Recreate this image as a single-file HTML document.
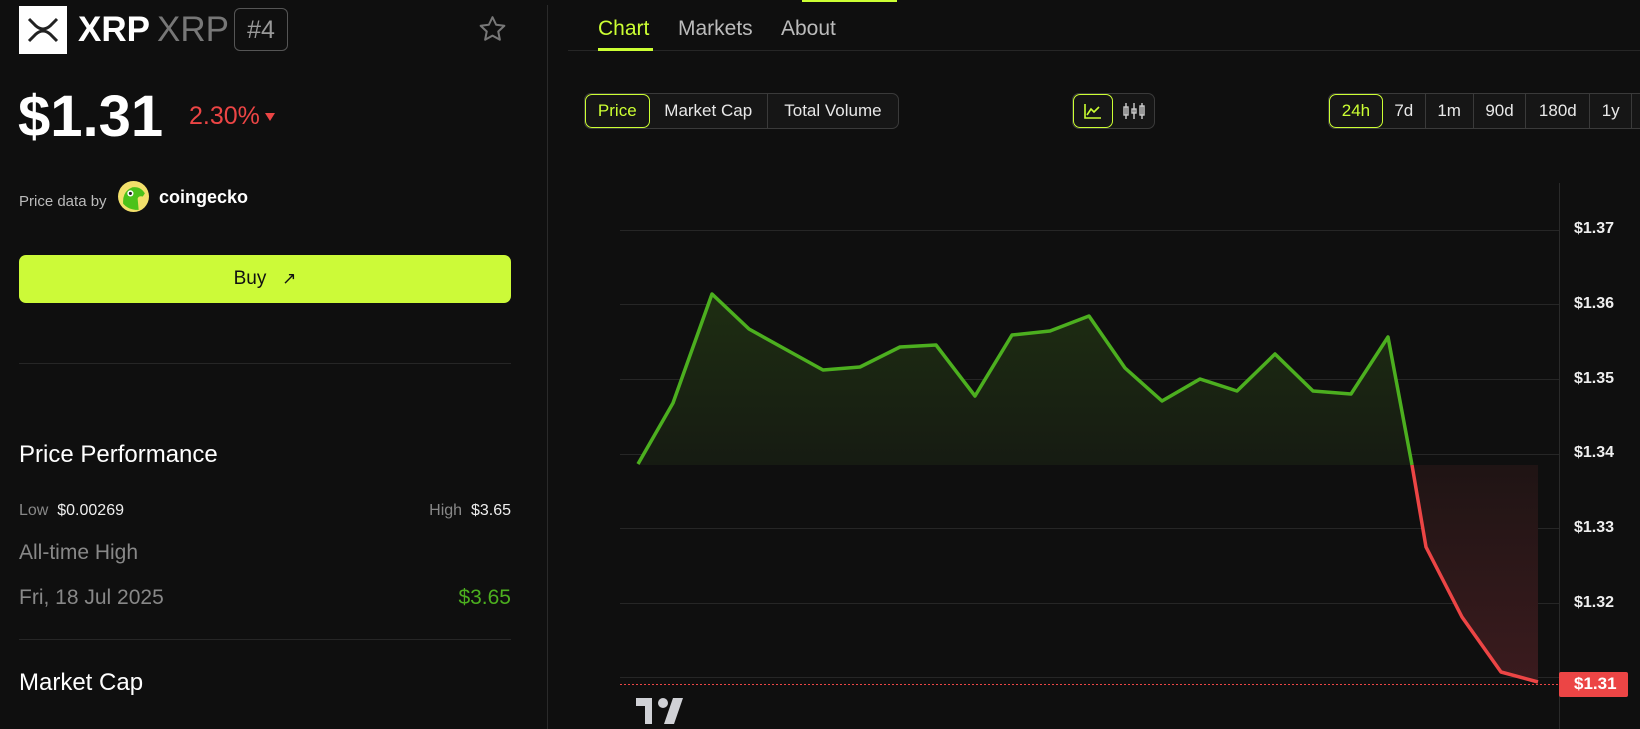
<!DOCTYPE html>
<html><head><meta charset="utf-8"><style>
*{margin:0;padding:0;box-sizing:border-box}
body{width:1640px;height:729px;background:#0f0f0f;overflow:hidden;position:relative;font-family:"Liberation Sans",sans-serif;color:#fff}
.a{position:absolute;white-space:nowrap}
.grp{position:absolute;display:flex;border:1px solid #3a3a3a;border-radius:7px;background:#161616;overflow:hidden;height:36px}
.grp div{display:flex;align-items:center;justify-content:center;border-right:1px solid #3a3a3a;font-size:17px;color:#e8e8e8;height:100%}
.grp div:last-child{border-right:none}
.grp .on{color:#ccff33;border:1px solid #ccff33;border-radius:7px}
.yl{position:absolute;left:1574px;font-size:16px;font-weight:bold;color:#eee}
</style></head><body>
<!-- chart -->
<svg class="a" style="left:0;top:0" width="1640" height="729">
<defs><linearGradient id="g" x1="0" y1="0" x2="0" y2="1"><stop offset="0" stop-color="#1e2e12"/><stop offset="1" stop-color="#161b12"/></linearGradient>
<linearGradient id="r" x1="0" y1="0" x2="0" y2="1"><stop offset="0" stop-color="#1f1414"/><stop offset="1" stop-color="#3b1b1e"/></linearGradient></defs>
<g stroke="#262626" stroke-width="1"><path d="M620 230.5H1559M620 304.5H1559M620 379.5H1559M620 454.5H1559M620 528.5H1559M620 603.5H1559M620 677.5H1559"/></g>
<path d="M1559.5 183V729" stroke="#2a2a2a"/>
<path d="M638 465 L638 464 673 403 712 294 749 329 785 349 823 370 860 367 900 347 936 345 975 396 1012 335 1050 331 1089 316 1125 368 1162 401 1200 379 1237 391 1275 354 1313 391 1351 394 1388 337 1412 465Z" fill="url(#g)"/>
<path d="M1412 465 L1426 547 1462 617 1501 672 1538 682 1538 465Z" fill="url(#r)"/>
<path d="M638 464 673 403 712 294 749 329 785 349 823 370 860 367 900 347 936 345 975 396 1012 335 1050 331 1089 316 1125 368 1162 401 1200 379 1237 391 1275 354 1313 391 1351 394 1388 337 1412 465" fill="none" stroke="#4caf1f" stroke-width="3.5" stroke-linejoin="round"/>
<path d="M1412 465 L1426 547 1462 617 1501 672 1538 682" fill="none" stroke="#ec4545" stroke-width="3.5" stroke-linejoin="round"/>
<path d="M620 684.5H1559" stroke="#ec4545" stroke-width="1" stroke-dasharray="2 2"/>
<rect x="1559" y="672" width="69" height="25" rx="2" fill="#ec4545"/>
<g fill="#d0d1d6"><path d="M636 698H652V724H645V706H636Z"/><circle cx="663" cy="703" r="5"/><path d="M673 698H683L674 724H664Z"/></g>
</svg>
<!-- left -->
<div class="a" style="left:19px;top:6px;width:48px;height:48px;background:#fff">
<svg width="48" height="48" viewBox="0 0 48 48"><path d="M10 13 L17 20 Q24 26 31 20 L38 13 M10 35 L17 28 Q24 22 31 28 L38 35" stroke="#222" stroke-width="3" fill="none"/></svg></div>
<div class="a" style="left:78px;top:8px;font-size:35px;font-weight:bold;line-height:44px">XRP</div>
<div class="a" style="left:157px;top:8px;font-size:35px;color:#777;line-height:44px">XRP</div>
<div class="a" style="left:234px;top:8px;width:54px;height:43px;border:1px solid #555;border-radius:6px;color:#999;font-size:25px;text-align:center;line-height:42px">#4</div>
<svg class="a" style="left:477px;top:14px" width="31" height="30" viewBox="0 0 24 24"><path d="M12 2.5l2.9 6.1 6.6.8-4.9 4.6 1.3 6.6L12 17.3 6.1 20.6l1.3-6.6-4.9-4.6 6.6-.8z" fill="none" stroke="#777" stroke-width="1.6" stroke-linejoin="round"/></svg>
<div class="a" style="left:18px;top:84px;font-size:58px;font-weight:bold;line-height:66px">$1.31</div>
<div class="a" style="left:189px;top:101px;font-size:25px;color:#ec4545;line-height:30px">2.30%</div>
<div class="a" style="left:265px;top:113px;width:0;height:0;border-left:5px solid transparent;border-right:5px solid transparent;border-top:8px solid #ec4545"></div>
<div class="a" style="left:19px;top:193px;font-size:15px;color:#bbb">Price data by</div>
<svg class="a" style="left:118px;top:181px" width="31" height="31" viewBox="0 0 30 30"><circle cx="15" cy="15" r="15" fill="#f2e06b"/><path d="M5 22 Q4 10 14 6 Q22 5 26 12 L24 15 Q20 14 19 17 L20 28 Q10 28 5 22Z" fill="#4bc21a"/><circle cx="12" cy="12" r="3" fill="#fff"/><circle cx="12" cy="12" r="1.5" fill="#222"/></svg>
<div class="a" style="left:159px;top:186px;font-size:18px;font-weight:bold;line-height:22px">coingecko</div>
<div class="a" style="left:19px;top:255px;width:492px;height:48px;background:#ccfa38;border-radius:7px;color:#111;font-size:19px;text-align:center;line-height:48px">Buy &nbsp;&nbsp;<span style="font-size:17px">↗</span></div>
<div class="a" style="left:19px;top:363px;width:492px;height:1px;background:#262626"></div>
<div class="a" style="left:19px;top:440px;font-size:24px;line-height:30px">Price Performance</div>
<div class="a" style="left:19px;top:501px;font-size:16px;color:#888;line-height:20px">Low &nbsp;<span style="color:#eee">$0.00269</span></div>
<div class="a" style="right:1129px;top:501px;font-size:16px;color:#888;line-height:20px">High &nbsp;<span style="color:#eee">$3.65</span></div>
<div class="a" style="left:19px;top:540px;font-size:21px;color:#888;line-height:26px">All-time High</div>
<div class="a" style="left:19px;top:585px;font-size:21px;color:#888;line-height:26px">Fri, 18 Jul 2025</div>
<div class="a" style="right:1129px;top:585px;font-size:21px;color:#4caf1f;line-height:26px">$3.65</div>
<div class="a" style="left:19px;top:639px;width:492px;height:1px;background:#262626"></div>
<div class="a" style="left:19px;top:668px;font-size:24px;line-height:30px">Market Cap</div>
<div class="a" style="left:547px;top:5px;width:1px;height:724px;background:#2a2a2a"></div>
<!-- right -->
<div class="a" style="left:802px;top:0;width:95px;height:2px;background:#ccff33"></div>
<div class="a" style="left:598px;top:16px;font-size:21px;color:#ccff33;line-height:26px">Chart</div>
<div class="a" style="left:678px;top:16px;font-size:21px;color:#bbb;line-height:26px">Markets</div>
<div class="a" style="left:781px;top:16px;font-size:21px;color:#bbb;line-height:26px">About</div>
<div class="a" style="left:568px;top:50px;width:1072px;height:1px;background:#262626"></div>
<div class="a" style="left:598px;top:48px;width:55px;height:3px;background:#ccff33"></div>
<div class="grp" style="left:584px;top:93px;width:315px"><div class="on" style="width:65px">Price</div><div style="width:119px">Market Cap</div><div style="width:131px">Total Volume</div></div>
<div class="grp" style="left:1072px;top:93px;width:83px"><div class="on" style="width:41px"><svg width="18" height="16"><path d="M1 1V15H17M3 12L7 6L10 9L15 4" stroke="#ccff33" stroke-width="1.6" fill="none"/></svg></div><div style="width:42px"><svg width="24" height="18"><g stroke="#ccc" stroke-width="1.4" fill="none"><path d="M4 1V17M12 1V17M20 1V17"/><rect x="2" y="5" width="4" height="8"/><rect x="10" y="7" width="4" height="4"/><rect x="18" y="4" width="4" height="9"/></g></svg></div></div>
<div class="grp" style="left:1328px;top:93px;width:330px;border-right:none;border-radius:7px 0 0 7px"><div class="on" style="width:54px">24h</div><div style="width:43px">7d</div><div style="width:48px">1m</div><div style="width:53px">90d</div><div style="width:64px">180d</div><div style="width:42px">1y</div><div style="width:26px"></div></div>
<div class="yl" style="top:220px">$1.37</div>
<div class="yl" style="top:295px">$1.36</div>
<div class="yl" style="top:370px">$1.35</div>
<div class="yl" style="top:444px">$1.34</div>
<div class="yl" style="top:519px">$1.33</div>
<div class="yl" style="top:594px">$1.32</div>
<div class="yl" style="top:674px;color:#fff;font-size:17px">$1.31</div>
</body></html>
